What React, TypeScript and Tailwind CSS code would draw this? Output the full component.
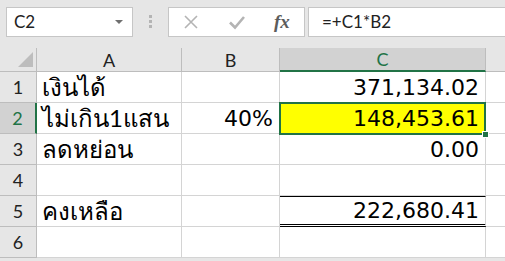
import React from 'react';

const GRID = 'border-[#d4d4d4]';
const NUM = "font-['DejaVu_Sans',sans-serif] text-[22px]";

type Row = { n: number; a: string; b: string; c: string };

const rows: Row[] = [
  { n: 1, a: 'เงินได้', b: '', c: '371,134.02' },
  { n: 2, a: 'ไม่เกิน1แสน', b: '40%', c: '148,453.61' },
  { n: 3, a: 'ลดหย่อน', b: '', c: '0.00' },
  { n: 4, a: '', b: '', c: '' },
  { n: 5, a: 'คงเหลือ', b: '', c: '222,680.41' },
  { n: 6, a: '', b: '', c: '' },
];

function Toolbar() {
  return (
    <div className="flex h-[48px] items-start pt-[7px] pl-[6px]">
      {/* name box */}
      <div className="flex h-[30px] w-[127px] items-center justify-between border border-[#c6c6c6] bg-white pl-[7px] pr-[9px] text-[17px] text-[#222]">
        <span>C2</span>
        <span className="h-0 w-0 border-x-[4px] border-t-[4px] border-x-transparent border-t-[#6f6f6f]" />
      </div>
      {/* grip */}
      <div className="ml-[16px] mt-[8px] flex flex-col gap-[2px]">
        <span className="h-[3px] w-[3px] bg-[#b4b4b4]" />
        <span className="h-[3px] w-[3px] bg-[#b4b4b4]" />
        <span className="h-[3px] w-[3px] bg-[#b4b4b4]" />
      </div>
      {/* cancel / enter / fx */}
      <div className="ml-[16px] flex h-[30px] w-[137px] items-center border border-[#c6c6c6] bg-white">
        <svg width="16" height="16" viewBox="0 0 16 16" className="ml-[14px]">
          <path d="M2 2 L14 14 M14 2 L2 14" stroke="#b4b4b4" strokeWidth="1.6" fill="none" />
        </svg>
        <svg width="18" height="16" viewBox="0 0 18 16" className="ml-[29px]">
          <path d="M2 8.5 L7 13.5 L16 3" stroke="#b4b4b4" strokeWidth="2.6" fill="none" />
        </svg>
        <span className="ml-[28px] font-['Liberation_Serif',serif] text-[19px] font-semibold italic text-[#5c5c5c]">
          fx
        </span>
      </div>
      {/* formula bar */}
      <div className="ml-[3px] flex h-[30px] flex-1 items-center border border-r-0 border-[#c6c6c6] bg-white pl-[13px] text-[17px] text-[#222]">
        =+C1*B2
      </div>
    </div>
  );
}

function HeaderRow() {
  return (
    <div className="flex h-[24px] text-[18px] leading-none">
      <div className="relative w-[37px] border-r border-b border-[#bdbdbd]">
        <span className="absolute bottom-[4px] right-[3px] h-0 w-0 border-b-[15px] border-l-[15px] border-l-transparent border-b-[#bdbdbd]" />
      </div>
      <div className="flex w-[145px] items-center justify-center border-r border-b border-[#bdbdbd] text-[#222]">A</div>
      <div className="flex w-[98px] items-center justify-center border-r border-b border-[#bdbdbd] text-[#222]">B</div>
      <div className="flex w-[206px] items-center justify-center border-r border-b-2 border-r-[#bdbdbd] border-b-[#217346] bg-[#d2d2d2] text-[#217346]">C</div>
      <div className="flex-1 border-b border-[#bdbdbd]" />
    </div>
  );
}

function DataRow({ r }: { r: Row }) {
  const sel = r.n === 2;
  const total = r.n === 5;
  return (
    <div className="flex h-[31px]">
      <div
        className={`flex w-[37px] items-center justify-center border-b border-[#bdbdbd] text-[18px] ${
          sel ? 'border-r-2 border-r-[#217346] bg-[#d2d2d2] text-[#217346]' : 'border-r border-r-[#bdbdbd] text-[#222]'
        }`}
      >
        {r.n}
      </div>
      <div className={`flex w-[145px] items-center overflow-hidden whitespace-nowrap border-r border-b ${GRID} bg-white pl-[5px] text-[24px] text-black`}>
        {r.a}
      </div>
      <div className={`flex w-[98px] items-center justify-end border-r border-b ${GRID} bg-white pr-[6px] ${NUM} text-black`}>
        {r.b}
      </div>
      <div
        className={`flex w-[206px] items-center justify-end border-r ${GRID} pr-[6px] ${NUM} text-black ${
          sel ? 'bg-[#ffff00]' : 'bg-white'
        } ${total ? 'border-t border-t-black border-b-[3px] border-double border-b-black' : 'border-b'}`}
      >
        {r.c}
      </div>
      <div className={`flex-1 border-b ${GRID} bg-white`} />
    </div>
  );
}

export default function App() {
  return (
    <div className="h-[261px] w-[505px] overflow-hidden bg-[#e6e6e6] font-['Lato','Noto_Sans',sans-serif]">
      <Toolbar />
      <HeaderRow />
      <div className="relative">
        {rows.map(r => (
          <DataRow key={r.n} r={r} />
        ))}
        {/* active cell outline */}
        <div className="absolute left-[279px] top-[30px] h-[33px] w-[207px] border-2 border-[#217346]" />
        <div className="absolute left-[482px] top-[59px] h-[7px] w-[7px] border border-white bg-[#217346]" />
      </div>
    </div>
  );
}
